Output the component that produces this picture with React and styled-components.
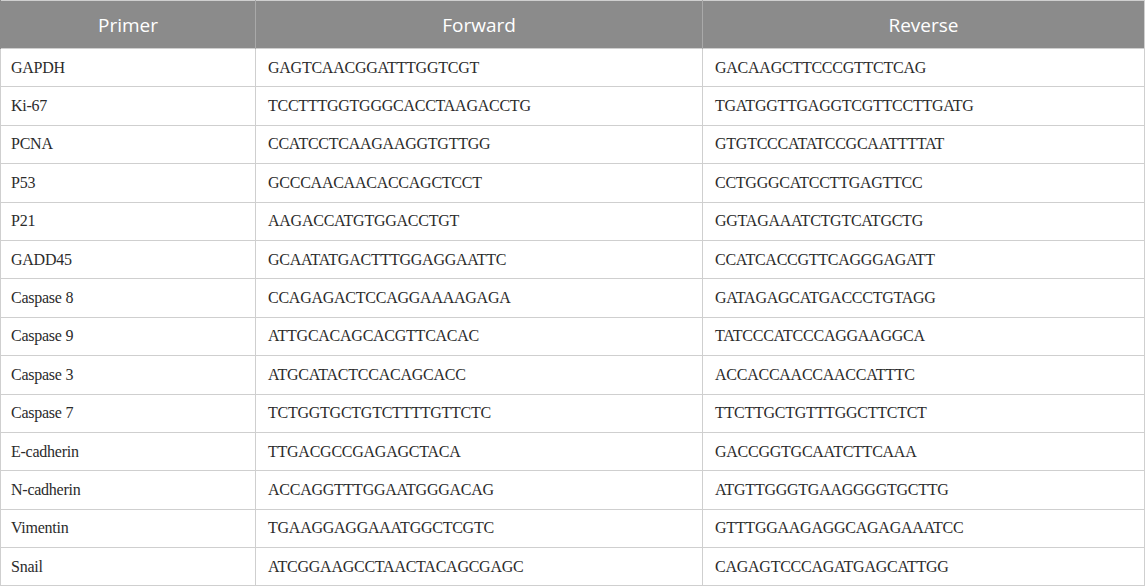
import styled, { createGlobalStyle } from 'styled-components';

const rows = [
  ['GAPDH', 'GAGTCAACGGATTTGGTCGT', 'GACAAGCTTCCCGTTCTCAG'],
  ['Ki-67', 'TCCTTTGGTGGGCACCTAAGACCTG', 'TGATGGTTGAGGTCGTTCCTTGATG'],
  ['PCNA', 'CCATCCTCAAGAAGGTGTTGG', 'GTGTCCCATATCCGCAATTTTAT'],
  ['P53', 'GCCCAACAACACCAGCTCCT', 'CCTGGGCATCCTTGAGTTCC'],
  ['P21', 'AAGACCATGTGGACCTGT', 'GGTAGAAATCTGTCATGCTG'],
  ['GADD45', 'GCAATATGACTTTGGAGGAATTC', 'CCATCACCGTTCAGGGAGATT'],
  ['Caspase 8', 'CCAGAGACTCCAGGAAAAGAGA', 'GATAGAGCATGACCCTGTAGG'],
  ['Caspase 9', 'ATTGCACAGCACGTTCACAC', 'TATCCCATCCCAGGAAGGCA'],
  ['Caspase 3', 'ATGCATACTCCACAGCACC', 'ACCACCAACCAACCATTTC'],
  ['Caspase 7', 'TCTGGTGCTGTCTTTTGTTCTC', 'TTCTTGCTGTTTGGCTTCTCT'],
  ['E-cadherin', 'TTGACGCCGAGAGCTACA', 'GACCGGTGCAATCTTCAAA'],
  ['N-cadherin', 'ACCAGGTTTGGAATGGGACAG', 'ATGTTGGGTGAAGGGGTGCTTG'],
  ['Vimentin', 'TGAAGGAGGAAATGGCTCGTC', 'GTTTGGAAGAGGCAGAGAAATCC'],
  ['Snail', 'ATCGGAAGCCTAACTACAGCGAGC', 'CAGAGTCCCAGATGAGCATTGG'],
];

const App = () => {
  return (
    <>
      <GlobalStyle />
      <Table>
        <colgroup>
          <col style={{ width: 255 }} />
          <col style={{ width: 447 }} />
          <col />
        </colgroup>
        <thead>
          <tr>
            <HeadCell>Primer</HeadCell>
            <HeadCell>Forward</HeadCell>
            <HeadCell>Reverse</HeadCell>
          </tr>
        </thead>
        <tbody>
          {rows.map(([name, fwd, rev]) => (
            <tr key={name}>
              <Cell $first>{name}</Cell>
              <Cell>{fwd}</Cell>
              <Cell>{rev}</Cell>
            </tr>
          ))}
        </tbody>
      </Table>
    </>
  );
};

const GlobalStyle = createGlobalStyle`
  html, body {
    margin: 0;
    padding: 0;
    background: #fff;
  }
`;

const Table = styled.table`
  width: 1145px;
  table-layout: fixed;
  border-collapse: collapse;
  border: 1px solid #cfcfcf;
`;

const HeadCell = styled.th`
  height: 48px;
  padding: 0;
  background: #8b8b8b;
  color: #fff;
  font-family: 'Open Sans', sans-serif;
  font-weight: 400;
  font-size: 19px;
  text-align: center;
  border-left: 1px solid #a9a9a9;
  box-sizing: border-box;

  &:first-child {
    border-left: 1px solid #8b8b8b;
  }
`;

const Cell = styled.td`
  height: 38.4px;
  box-sizing: border-box;
  padding: 0 0 0 ${p => (p.$first ? '10px' : '12px')};
  border: 1px solid #cfcfcf;
  color: #2b2b2b;
  font-family: 'Liberation Serif', 'Times New Roman', serif;
  font-size: 16px;
  letter-spacing: -0.25px;
  white-space: nowrap;
`;

export default App;
